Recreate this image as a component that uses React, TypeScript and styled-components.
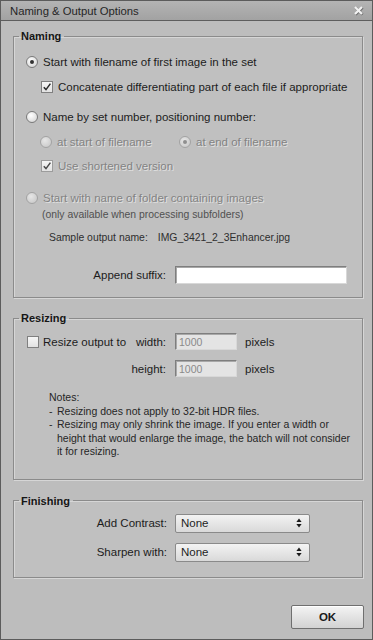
import React from 'react';
import styled, { createGlobalStyle } from 'styled-components';

const Global = createGlobalStyle`
  html, body { margin: 0; padding: 0; background: #bdbdbd; }
  body {
    font-family: "Liberation Sans", Arial, sans-serif;
    font-size: 11.5px;
    color: #1c1c1c;
  }
  * { box-sizing: border-box; }
`;

const Window = styled.div`
  width: 373px;
  height: 640px;
  display: flex;
  flex-direction: column;
  background: #bdbdbd;
  border: 1px solid #5c5c5c;
`;

const TitleBar = styled.div`
  height: 20px;
  flex: none;
  display: flex;
  align-items: center;
  justify-content: space-between;
  padding: 0 8px 0 9px;
  background: linear-gradient(#b4b4b4, #a2a2a2);
  border-bottom: 1px solid #5e5e5e;
  color: #262626;
  font-size: 11.3px;
`;

const Content = styled.div`
  flex: 1;
  display: flex;
  flex-direction: column;
  padding: 0 9px 0 12px;
`;

const Group = styled.fieldset<{ $mt: number }>`
  margin: ${p => p.$mt}px 0 0 0;
  padding: 0;
  min-width: 0;
  border: 1px solid #8b8b8b;
  box-shadow: inset 1px 1px 0 #d6d6d6, 1px 1px 0 #d6d6d6;
  background: #c0c0c0;
`;

const Legend = styled.legend`
  margin-left: 5px;
  padding: 0 3px 0 2px;
  font-weight: bold;
  font-size: 11px;
  line-height: 14px;
  color: #161616;
`;

const GroupBody = styled.div<{ $pt: number; $pb: number; $pl: number }>`
  display: flex;
  flex-direction: column;
  padding: ${p => p.$pt}px 0 ${p => p.$pb}px ${p => p.$pl}px;
`;

const Row = styled.div<{ $mt?: number; $ml?: number; $h?: number }>`
  display: flex;
  align-items: center;
  height: ${p => p.$h ?? 16}px;
  margin-top: ${p => p.$mt ?? 0}px;
  margin-left: ${p => p.$ml ?? 0}px;
  gap: 5px;
  white-space: nowrap;
`;

const Option = styled.div<{ $w?: number }>`
  display: flex;
  align-items: center;
  gap: 5px;
  width: ${p => (p.$w ? `${p.$w}px` : 'auto')};
`;

const Label = styled.span<{ $disabled?: boolean }>`
  color: ${p => (p.$disabled ? '#838383' : '#1c1c1c')};
  text-shadow: ${p => (p.$disabled ? '1px 1px 0 #e0e0e0' : 'none')};
`;

const Radio = styled.span<{ $checked?: boolean; $disabled?: boolean }>`
  flex: none;
  width: 12px;
  height: 12px;
  border-radius: 50%;
  border: 1px solid ${p => (p.$disabled ? '#a3a3a3' : '#7a7a7a')};
  background: ${p =>
    p.$disabled
      ? 'radial-gradient(circle at 40% 35%, #e6e6e6, #c4c4c4)'
      : 'radial-gradient(circle at 40% 35%, #ffffff, #cfcfcf)'};
  display: inline-flex;
  align-items: center;
  justify-content: center;
  &::after {
    content: '';
    width: 4px;
    height: 4px;
    border-radius: 50%;
    background: ${p => (p.$checked ? (p.$disabled ? '#8f8f8f' : '#333') : 'transparent')};
  }
`;

const Box = styled.span<{ $disabled?: boolean }>`
  flex: none;
  width: 12px;
  height: 12px;
  border: 1px solid ${p => (p.$disabled ? '#9c9c9c' : '#808080')};
  background: linear-gradient(#f6f6f6, #e2e2e2);
  display: inline-flex;
  align-items: center;
  justify-content: center;
`;

const Check = ({ checked, disabled }: { checked?: boolean; disabled?: boolean }) => (
  <Box $disabled={disabled}>
    {checked && (
      <svg width="10" height="10" viewBox="0 0 10 10">
        <path d="M1.8 5.2 L4 7.6 L8.4 1.6" fill="none" stroke={disabled ? '#4a4a4a' : '#2a2a2a'} strokeWidth="1.5" />
      </svg>
    )}
  </Box>
);

const Note = styled.div<{ $mt: number; $ml: number }>`
  margin-top: ${p => p.$mt}px;
  margin-left: ${p => p.$ml}px;
  height: 14px;
  line-height: 14px;
  font-size: 10.4px;
  color: #505050;
  white-space: nowrap;
`;

const Sample = styled.div`
  margin-top: 8px;
  margin-left: 23px;
  height: 14px;
  display: flex;
  align-items: center;
  gap: 10px;
  font-size: 10.4px;
  color: #2e2e2e;
  white-space: nowrap;
`;

const FieldGrid = styled.div<{ $cols: string; $mt?: number; $rowGap?: number; $ml?: number }>`
  display: grid;
  grid-template-columns: ${p => p.$cols};
  column-gap: 0;
  row-gap: ${p => p.$rowGap ?? 0}px;
  align-items: center;
  margin-top: ${p => p.$mt ?? 0}px;
  margin-left: ${p => p.$ml ?? 0}px;
  white-space: nowrap;
`;

const RightLabel = styled.span<{ $gap: number }>`
  text-align: right;
  padding-right: ${p => p.$gap}px;
`;

const TextInput = styled.div<{ $w: number; $h: number; $bg: string }>`
  width: ${p => p.$w}px;
  height: ${p => p.$h}px;
  background: ${p => p.$bg};
  border: 1px solid #7e7e7e;
  border-right-color: #d8d8d8;
  border-bottom-color: #d8d8d8;
  box-shadow: inset 1px 1px 0 #a8a8a8;
  display: flex;
  align-items: center;
  padding-left: 3px;
  font-size: 10.5px;
  color: #8a8a8a;
`;

const Unit = styled.span`
  padding-left: 8px;
`;

const CheckLabel = styled.div`
  display: flex;
  align-items: center;
  gap: 4px;
`;

const Notes = styled.div`
  margin: 14px 0 0 22px;
  font-size: 10.5px;
  line-height: 13.5px;
  color: #262626;
`;

const NoteItem = styled.div`
  display: flex;
  white-space: nowrap;
`;

const Dash = styled.span`
  width: 8px;
  flex: none;
`;

const Select = styled.div`
  width: 135px;
  height: 19px;
  border: 1px solid #8a8a8a;
  border-radius: 2px;
  background: linear-gradient(#f3f3f3, #d9d9d9);
  display: flex;
  align-items: center;
  justify-content: space-between;
  padding: 0 7px 0 5px;
  color: #1e1e1e;
  font-size: 11.5px;
`;

const Arrows = () => (
  <svg width="6" height="10" viewBox="0 0 6 10">
    <path d="M3 0.5 L5.6 4 L0.4 4 Z" fill="#1a1a1a" />
    <path d="M3 9.5 L5.6 6 L0.4 6 Z" fill="#1a1a1a" />
  </svg>
);

const ButtonRow = styled.div`
  display: flex;
  justify-content: flex-end;
  margin-top: 27px;
  margin-right: -1px;
`;

const Button = styled.button`
  width: 73px;
  height: 24px;
  border: 1px solid #6f6f6f;
  border-radius: 2px;
  background: linear-gradient(#f4f4f4, #d2d2d2);
  box-shadow: inset 0 1px 0 #ffffff;
  font-family: "Liberation Sans", Arial, sans-serif;
  font-weight: bold;
  font-size: 11.5px;
  color: #1a1a1a;
  padding: 0;
`;

const CloseIcon = () => (
  <svg width="11" height="11" viewBox="0 0 11 11">
    <path d="M2 2 L9 9 M9 2 L2 9" stroke="#6a6a6a" strokeWidth="2.6" transform="translate(0.6,0.6)" />
    <path d="M2 2 L9 9 M9 2 L2 9" stroke="#f2f2f2" strokeWidth="2.2" />
  </svg>
);

export default function App() {
  return (
    <>
      <Global />
      <Window>
        <TitleBar>
          <span>Naming &amp; Output Options</span>
          <CloseIcon />
        </TitleBar>
        <Content>
          <Group $mt={8}>
            <Legend>Naming</Legend>
            <GroupBody $pt={11} $pb={13} $pl={12}>
              <Row>
                <Radio $checked />
                <Label>Start with filename of first image in the set</Label>
              </Row>
              <Row $mt={9} $ml={15}>
                <Check checked />
                <Label>Concatenate differentiating part of each file if appropriate</Label>
              </Row>
              <Row $mt={14}>
                <Radio />
                <Label>Name by set number, positioning number:</Label>
              </Row>
              <Row $mt={9} $ml={14}>
                <Option $w={134}>
                  <Radio $disabled />
                  <Label $disabled>at start of filename</Label>
                </Option>
                <Option>
                  <Radio $disabled $checked />
                  <Label $disabled>at end of filename</Label>
                </Option>
              </Row>
              <Row $mt={8} $ml={15}>
                <Check checked disabled />
                <Label $disabled>Use shortened version</Label>
              </Row>
              <Row $mt={16}>
                <Radio $disabled />
                <Label $disabled>Start with name of folder containing images</Label>
              </Row>
              <Note $mt={2} $ml={16}>(only available when processing subfolders)</Note>
              <Sample>
                <span>Sample output name:</span>
                <span>IMG_3421_2_3Enhancer.jpg</span>
              </Sample>
              <FieldGrid $cols="158px 172px" $mt={22} $ml={-9}>
                <RightLabel $gap={9}>Append suffix:</RightLabel>
                <TextInput $w={172} $h={18} $bg="#ffffff" />
              </FieldGrid>
            </GroupBody>
          </Group>

          <Group $mt={13}>
            <Legend>Resizing</Legend>
            <GroupBody $pt={8} $pb={20} $pl={13}>
              <FieldGrid $cols="97px 51px 62px auto" $rowGap={10}>
                <CheckLabel>
                  <Check />
                  <span>Resize output to</span>
                </CheckLabel>
                <RightLabel $gap={9}>width:</RightLabel>
                <TextInput $w={62} $h={17} $bg="#e4e4e4">1000</TextInput>
                <Unit>pixels</Unit>
                <span />
                <RightLabel $gap={9}>height:</RightLabel>
                <TextInput $w={62} $h={17} $bg="#e4e4e4">1000</TextInput>
                <Unit>pixels</Unit>
              </FieldGrid>
              <Notes>
                <div>Notes:</div>
                <NoteItem>
                  <Dash>-</Dash>
                  <span>Resizing does not apply to 32-bit HDR files.</span>
                </NoteItem>
                <NoteItem>
                  <Dash>-</Dash>
                  <span>
                    Resizing may only shrink the image. If you enter a width or
                    <br />
                    height that would enlarge the image, the batch will not consider
                    <br />
                    it for resizing.
                  </span>
                </NoteItem>
              </Notes>
            </GroupBody>
          </Group>

          <Group $mt={14}>
            <Legend>Finishing</Legend>
            <GroupBody $pt={6} $pb={15} $pl={0}>
              <FieldGrid $cols="161px 135px" $rowGap={10}>
                <RightLabel $gap={8}>Add Contrast:</RightLabel>
                <Select>
                  <span>None</span>
                  <Arrows />
                </Select>
                <RightLabel $gap={8}>Sharpen with:</RightLabel>
                <Select>
                  <span>None</span>
                  <Arrows />
                </Select>
              </FieldGrid>
            </GroupBody>
          </Group>

          <ButtonRow>
            <Button>OK</Button>
          </ButtonRow>
        </Content>
      </Window>
    </>
  );
}
